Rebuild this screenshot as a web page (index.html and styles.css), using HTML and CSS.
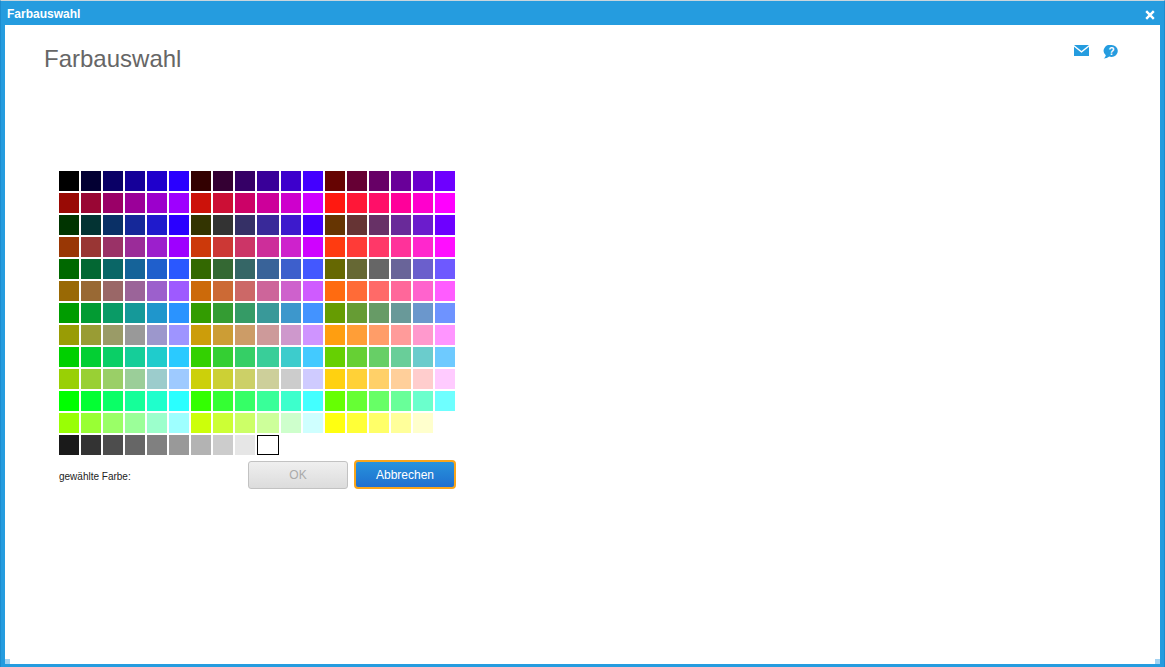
FILE: index.html
```html
<!DOCTYPE html>
<html lang="de">
<head>
<meta charset="utf-8">
<title>Farbauswahl</title>
<link rel="stylesheet" href="styles.css">
</head>
<body>
<div class="window">
  <header class="titlebar">
    <span class="titlebar-text">Farbauswahl</span>
    <svg class="close" viewBox="0 0 10 10" width="10" height="10" aria-label="Schließen"><path d="M1.200 1.200 8.800 8.800M8.800 1.200 1.200 8.800" stroke="#fff" stroke-width="2.400" fill="none"/></svg>
  </header>
  <main class="content">
    <div class="top">
      <h1 class="heading">Farbauswahl</h1>
      <div class="tools">
        <svg class="tool" viewBox="0 0 15 11" width="15" height="11"><path fill="#259cdf" d="M0 0h15L7.500 6z"/><path fill="#259cdf" d="M0 1.800V11h15V1.800L7.500 7.800z"/></svg>
        <svg class="tool" viewBox="0 0 15 14" width="15" height="14"><path fill="#259cdf" d="M8.500 0a6.300 6 0 0 1 0 12 6.500 6.500 0 0 1-2.300-.4C4.800 12.900 2.800 13.600.6 13.600c1.100-.8 1.900-1.800 2.200-3.300A6.300 6 0 0 1 8.500 0z"/><text x="8.500" y="10" class="help-mark">?</text></svg>
      </div>
    </div>
    <div class="picker">
      <div class="palette" id="palette"></div>
      <div class="footer">
        <span class="chosen">gewählte Farbe:</span>
        <div class="buttons">
          <button class="btn btn-ok" disabled>OK</button>
          <button class="btn btn-cancel">Abbrechen</button>
        </div>
      </div>
    </div>
  </main>
  <span class="grip grip-left"></span>
  <span class="grip grip-right"></span>
</div>
<script src="script.js"></script>
</body>
</html>
```

FILE: styles.css
```css
* { box-sizing: border-box; }
html, body { margin: 0; height: 100%; }
body { font-family: "Liberation Sans", Arial, sans-serif; background: #fff; overflow: hidden; }

.window {
  position: relative;
  width: 1165px;
  height: 667px;
  display: flex;
  flex-direction: column;
  background: #259cdf;
  border-top: 1px solid #c9d6dd;
  border-left: 1px solid #1c8ccf;
  border-right: 1px solid #1c8ccf;
  padding: 0 4px 3px 4px;
}

.titlebar {
  height: 24px;
  flex: none;
  display: flex;
  align-items: center;
  justify-content: space-between;
  margin: 0 -5px;
  padding: 0 10px 0 7px;
  color: #fff;
}
.titlebar-text { font-size: 12px; font-weight: bold; margin-top: 2px; }
.close { display: block; margin-top: 3px; }

.content { flex: 1; background: #fff; min-height: 0; }

.top {
  height: 146px;
  display: flex;
  justify-content: space-between;
  align-items: flex-start;
  padding: 0 42px 0 39px;
}
.heading {
  margin: 20px 0 0;
  font-size: 24px;
  line-height: 28px;
  font-weight: normal;
  color: #666;
}
.tools { display: flex; gap: 14px; align-items: flex-start; margin-top: 20px; }
.tool { display: block; }
.help-mark { font: bold 10px "Liberation Sans", Arial, sans-serif; fill: #fff; text-anchor: middle; }

.picker { width: 397px; margin-left: 54px; }
.palette {
  display: grid;
  grid-template-columns: repeat(9, 20px) 22px repeat(8, 20px);
  grid-auto-rows: 20px;
  gap: 2px;
}
.selected { border: 1px solid #000; }

.footer {
  display: flex;
  align-items: center;
  justify-content: space-between;
  margin-top: 5px;
}
.chosen { font-size: 10px; color: #222; margin-top: 4px; }
.buttons { display: flex; gap: 6px; align-items: center; }
.btn {
  font-family: "Liberation Sans", Arial, sans-serif;
  font-size: 12px;
  padding: 0;
}
.btn-ok {
  width: 100px;
  height: 28px;
  color: #aaa;
  background: linear-gradient(#efefef, #dcdcdc);
  border: 1px solid #c2c2c2;
  border-radius: 3px;
}
.btn-cancel {
  width: 102px;
  height: 29px;
  color: #fff;
  background: linear-gradient(#2793dc, #1f6fcf);
  border: 2px solid #f9a51a;
  border-radius: 4px;
}

.grip {
  position: absolute;
  bottom: 3px;
  width: 5px;
  height: 5px;
  background: #a3d3f2;
}
.grip-left { left: 4px; }
.grip-right { right: 4px; }
```

FILE: script.js
```js
// The colour table: the web-safe cube in 12 rows of 18, then a grey ramp.
// Colours carry the slight shift of the display profile they were captured on.
var STEPS = [0x00, 0x33, 0x66, 0x99, 0xCC, 0xFF];
var GREYS = [0x1A, 0x33, 0x4D, 0x66, 0x80, 0x99, 0xB3, 0xCC, 0xE6, 0xFF];

function toLinear(v) {
  v /= 255;
  return v <= 0.04045 ? v / 12.92 : Math.pow((v + 0.055) / 1.055, 2.4);
}
function toByte(v) {
  v = Math.min(1, Math.max(0, v));
  v = v <= 0.0031308 ? v * 12.92 : 1.055 * Math.pow(v, 1 / 2.4) - 0.055;
  return Math.round(v * 255);
}
function shifted(r, g, b) {
  var lr = toLinear(r), lg = toLinear(g), lb = toLinear(b);
  return "rgb(" +
    toByte(lr + 0.0232 * lb) + "," +
    toByte(lg * 1.04 - 0.04 * lb + 0.01 * lr) + "," +
    toByte(lb + 0.005 * lr) + ")";
}

var palette = document.getElementById("palette");
function addSwatch(color, selected) {
  var swatch = document.createElement("div");
  swatch.className = selected ? "swatch selected" : "swatch";
  swatch.style.background = color;
  palette.appendChild(swatch);
}

for (var row = 0; row < 12; row++) {
  var g = STEPS[row >> 1];
  var reds = row % 2 ? [3, 4, 5] : [0, 1, 2];
  reds.forEach(function (ri) {
    STEPS.forEach(function (b) {
      var r = STEPS[ri];
      var grey = r === g && g === b;
      addSwatch(grey ? "rgb(" + r + "," + g + "," + b + ")" : shifted(r, g, b), false);
    });
  });
}
GREYS.forEach(function (v, i) {
  addSwatch("rgb(" + v + "," + v + "," + v + ")", i === GREYS.length - 1);
});
```
